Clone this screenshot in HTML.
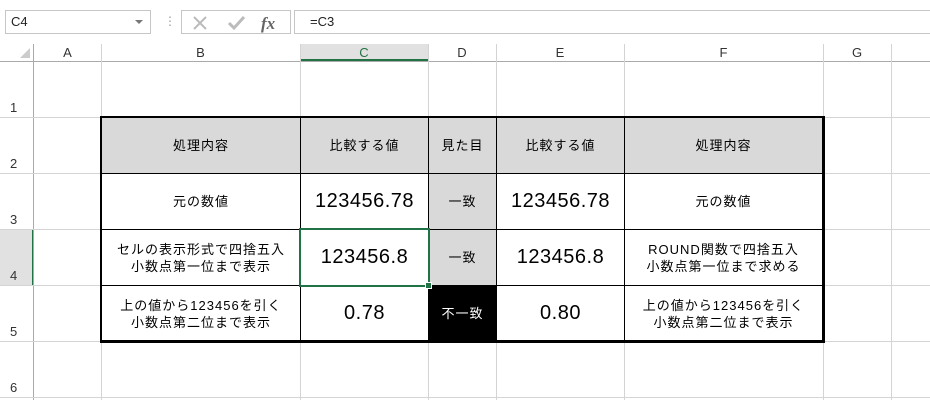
<!DOCTYPE html><html><head><meta charset="utf-8"><style>
*{margin:0;padding:0;box-sizing:border-box}
body{width:930px;height:400px;background:#fff;position:relative;overflow:hidden;font-family:"Liberation Sans","Noto Sans CJK JP",sans-serif;color:#000}
.a{position:absolute}
.vl{position:absolute;width:1px;background:#d4d4d4}
.hl{position:absolute;height:1px;background:#d4d4d4}
.ch{position:absolute;top:44px;height:17px;font-size:13px;color:#333;text-align:center;line-height:17px}
.rh{position:absolute;left:0;width:33px;font-size:13px;color:#333;padding-left:10px}
.c{position:absolute;display:flex;align-items:center;justify-content:center;text-align:center;font-size:13px;line-height:17px;letter-spacing:1px;border-right:1px solid #000;border-bottom:1px solid #000}
.n{font-size:20px;letter-spacing:0.5px}
</style></head><body>
<div class="a" style="left:5px;top:10px;width:146px;height:24px;border:1px solid #c6c6c6;font-size:13px;line-height:22px;padding-left:5px;color:#222">C4</div>
<div class="a" style="left:135px;top:20px;width:0;height:0;border-left:4px solid transparent;border-right:4px solid transparent;border-top:4px solid #777"></div>
<div class="a" style="left:164px;top:14px;font-size:12px;color:#999">⋮</div>
<div class="a" style="left:181px;top:10px;width:110px;height:24px;border:1px solid #c6c6c6"></div>
<svg class="a" style="left:190px;top:13px" width="100" height="20"><path d="M4 4L16 16M16 4L4 16" stroke="#bbb" stroke-width="2"/><path d="M39 10L44 15L54 4" stroke="#bbb" stroke-width="3" fill="none"/><text x="71" y="16" font-family="Liberation Serif,serif" font-style="italic" font-weight="bold" font-size="17" fill="#666">fx</text></svg>
<div class="a" style="left:294px;top:10px;width:640px;height:24px;border:1px solid #c6c6c6;font-size:13px;line-height:22px;padding-left:15px;color:#222">=C3</div>
<div class="a" style="left:300px;top:44px;width:128px;height:17px;background:#e1e1e1"></div>
<div class="a" style="left:300px;top:59px;width:128px;height:2px;background:#217346"></div>
<div class="a" style="left:0;top:229px;width:33px;height:56px;background:#e1e1e1"></div>
<div class="a" style="left:32px;top:229px;width:2px;height:56px;background:#217346"></div>
<div class="hl" style="left:0;top:61px;width:930px;background:#aaa"></div>
<div class="vl" style="left:33px;top:44px;height:356px;background:#aaa"></div>
<svg class="a" style="left:20px;top:48px" width="10" height="10"><path d="M10 0L10 10L0 10Z" fill="#ccc"/></svg>
<div class="vl" style="left:101px;top:44px;height:356px"></div>
<div class="vl" style="left:300px;top:44px;height:356px"></div>
<div class="vl" style="left:428px;top:44px;height:356px"></div>
<div class="vl" style="left:496px;top:44px;height:356px"></div>
<div class="vl" style="left:624px;top:44px;height:356px"></div>
<div class="vl" style="left:823px;top:44px;height:356px"></div>
<div class="vl" style="left:891px;top:44px;height:356px"></div>
<div class="hl" style="left:0;top:117px;width:930px"></div>
<div class="hl" style="left:0;top:173px;width:930px"></div>
<div class="hl" style="left:0;top:229px;width:930px"></div>
<div class="hl" style="left:0;top:285px;width:930px"></div>
<div class="hl" style="left:0;top:341px;width:930px"></div>
<div class="hl" style="left:0;top:397px;width:930px"></div>
<div class="ch" style="left:34px;width:67px">A</div>
<div class="ch" style="left:101px;width:199px">B</div>
<div class="ch" style="left:300px;width:128px;color:#217346">C</div>
<div class="ch" style="left:428px;width:68px">D</div>
<div class="ch" style="left:496px;width:128px">E</div>
<div class="ch" style="left:624px;width:199px">F</div>
<div class="ch" style="left:823px;width:68px">G</div>
<div class="rh" style="top:100px">1</div>
<div class="rh" style="top:156px">2</div>
<div class="rh" style="top:212px">3</div>
<div class="rh" style="top:268px">4</div>
<div class="rh" style="top:324px">5</div>
<div class="rh" style="top:380px">6</div>
<div class="a" style="left:100px;top:116px;width:725px;height:227px;border:2px solid #000;border-right-width:3px;border-bottom-width:3px;background:#fff"></div>
<div class="c" style="left:102px;top:118px;width:199px;height:56px;background:#d9d9d9">処理内容</div>
<div class="c" style="left:301px;top:118px;width:128px;height:56px;background:#d9d9d9">比較する値</div>
<div class="c" style="left:429px;top:118px;width:68px;height:56px;background:#d9d9d9">見た目</div>
<div class="c" style="left:497px;top:118px;width:128px;height:56px;background:#d9d9d9">比較する値</div>
<div class="c" style="left:625px;top:118px;width:197px;height:56px;background:#d9d9d9;border-right:0">処理内容</div>
<div class="c" style="left:102px;top:174px;width:199px;height:56px">元の数値</div>
<div class="c n" style="left:301px;top:174px;width:128px;height:56px">123456.78</div>
<div class="c" style="left:429px;top:174px;width:68px;height:56px;background:#d9d9d9">一致</div>
<div class="c n" style="left:497px;top:174px;width:128px;height:56px">123456.78</div>
<div class="c" style="left:625px;top:174px;width:197px;height:56px;border-right:0">元の数値</div>
<div class="c" style="left:102px;top:230px;width:199px;height:56px">セルの表示形式で四捨五入<br>小数点第一位まで表示</div>
<div class="c n" style="left:301px;top:230px;width:128px;height:56px">123456.8</div>
<div class="c" style="left:429px;top:230px;width:68px;height:56px;background:#d9d9d9">一致</div>
<div class="c n" style="left:497px;top:230px;width:128px;height:56px">123456.8</div>
<div class="c" style="left:625px;top:230px;width:197px;height:56px;border-right:0">ROUND関数で四捨五入<br>小数点第一位まで求める</div>
<div class="c" style="left:102px;top:286px;width:199px;height:55px;border-bottom:0">上の値から123456を引く<br>小数点第二位まで表示</div>
<div class="c n" style="left:301px;top:286px;width:128px;height:55px;border-bottom:0">0.78</div>
<div class="c" style="left:429px;top:286px;width:68px;height:55px;background:#000;color:#fff;border-bottom:0">不一致</div>
<div class="c n" style="left:497px;top:286px;width:128px;height:55px;border-bottom:0">0.80</div>
<div class="c" style="left:625px;top:286px;width:197px;height:55px;border-right:0;border-bottom:0">上の値から123456を引く<br>小数点第二位まで表示</div>
<div class="a" style="left:299px;top:228px;width:131px;height:59px;border:2px solid #217346"></div>
<div class="a" style="left:426px;top:283px;width:5px;height:5px;background:#217346;outline:1px solid #fff"></div>
</body></html>
